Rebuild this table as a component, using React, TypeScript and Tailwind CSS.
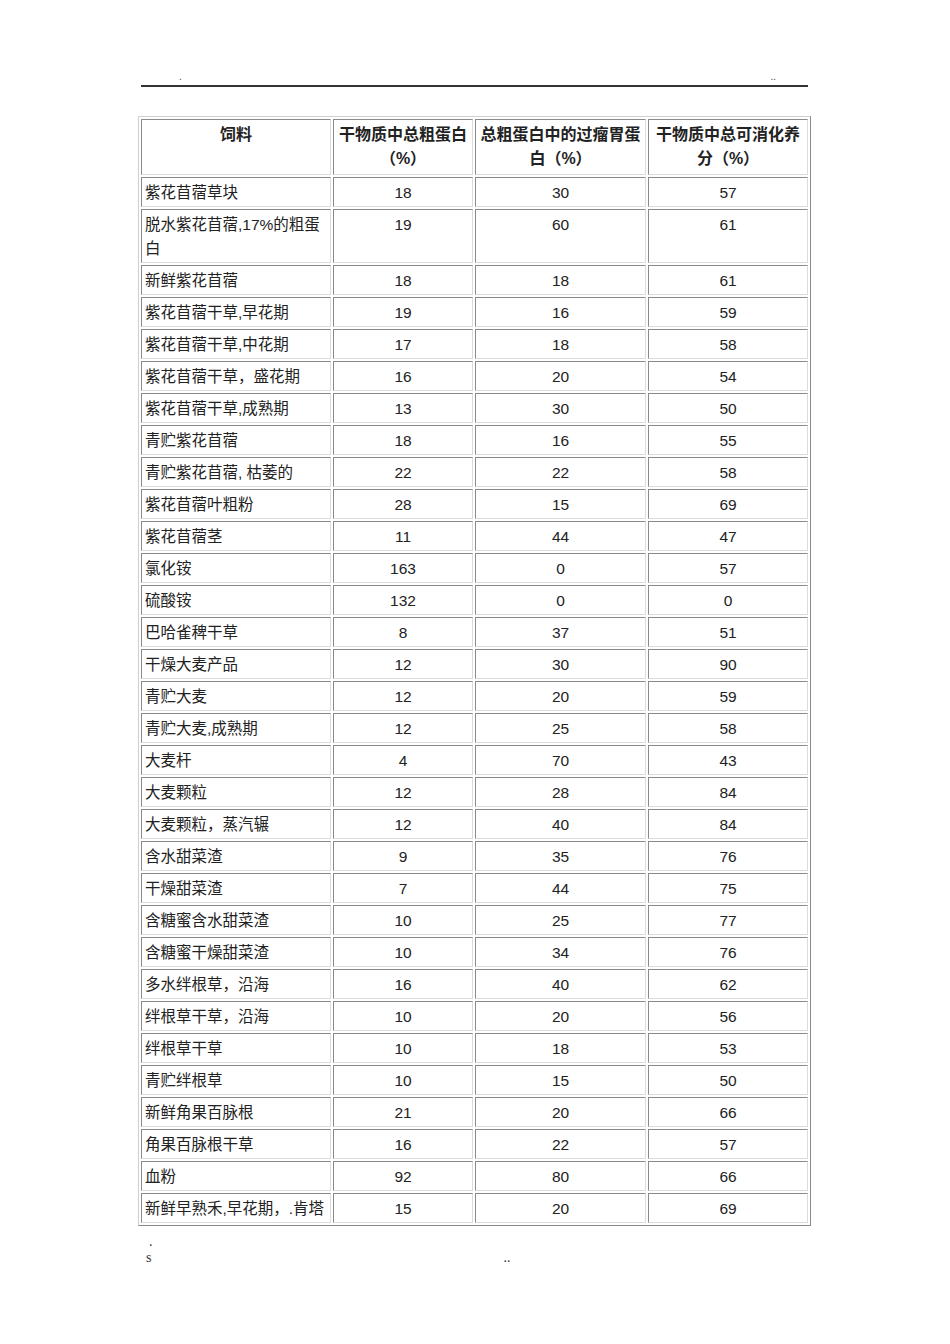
import React from 'react';

type Row = [string, string, string, string];

const rows: Row[] = [
  ['紫花苜蓿草块', '18', '30', '57'],
  ['脱水紫花苜蓿,17%的粗蛋白', '19', '60', '61'],
  ['新鲜紫花苜蓿', '18', '18', '61'],
  ['紫花苜蓿干草,早花期', '19', '16', '59'],
  ['紫花苜蓿干草,中花期', '17', '18', '58'],
  ['紫花苜蓿干草，盛花期', '16', '20', '54'],
  ['紫花苜蓿干草,成熟期', '13', '30', '50'],
  ['青贮紫花苜蓿', '18', '16', '55'],
  ['青贮紫花苜蓿, 枯萎的', '22', '22', '58'],
  ['紫花苜蓿叶粗粉', '28', '15', '69'],
  ['紫花苜蓿茎', '11', '44', '47'],
  ['氯化铵', '163', '0', '57'],
  ['硫酸铵', '132', '0', '0'],
  ['巴哈雀稗干草', '8', '37', '51'],
  ['干燥大麦产品', '12', '30', '90'],
  ['青贮大麦', '12', '20', '59'],
  ['青贮大麦,成熟期', '12', '25', '58'],
  ['大麦杆', '4', '70', '43'],
  ['大麦颗粒', '12', '28', '84'],
  ['大麦颗粒，蒸汽辗', '12', '40', '84'],
  ['含水甜菜渣', '9', '35', '76'],
  ['干燥甜菜渣', '7', '44', '75'],
  ['含糖蜜含水甜菜渣', '10', '25', '77'],
  ['含糖蜜干燥甜菜渣', '10', '34', '76'],
  ['多水绊根草，沿海', '16', '40', '62'],
  ['绊根草干草，沿海', '10', '20', '56'],
  ['绊根草干草', '10', '18', '53'],
  ['青贮绊根草', '10', '15', '50'],
  ['新鲜角果百脉根', '21', '20', '66'],
  ['角果百脉根干草', '16', '22', '57'],
  ['血粉', '92', '80', '66'],
  ['新鲜早熟禾,早花期，.肯塔', '15', '20', '69'],
];

const cell =
  'border border-t-[#8a8a8a] border-l-[#8a8a8a] border-r-[#dcdcdc] border-b-[#dcdcdc] align-top pt-[3px] pb-[1px] leading-[24px]';

const App: React.FC = () => {
  return (
    <div className="w-[950px] h-[1344px] bg-white text-[#222] font-['Liberation_Sans','Noto_Sans_CJK_SC',sans-serif]">
      {/* page header */}
      <div className="ml-[141px] w-[667px] pt-[70px]">
        <div className="flex justify-between text-[10px] leading-[14px] text-[#444]">
          <span className="ml-[38px]">.</span>
          <span className="mr-[32px]">..</span>
        </div>
        <div className="h-[2px] bg-[#333] mt-[1px]" />
      </div>

      <table className="ml-[138px] mt-[29px] w-[673px] table-fixed border-separate border-spacing-[2px] border border-t-[#cfcfcf] border-l-[#cfcfcf] border-r-[#8a8a8a] border-b-[#8a8a8a]">
        <thead>
          <tr>
            <th className={`${cell} w-[190px] text-[16px] font-bold text-center pt-[2px] pb-[3px]`}>饲料</th>
            <th className={`${cell} w-[140px] text-[16px] font-bold text-center px-[2px] pt-[2px] pb-[3px]`}>
              干物质中总粗蛋白（%）
            </th>
            <th className={`${cell} w-[171px] text-[16px] font-bold text-center px-[2px] pt-[2px] pb-[3px]`}>
              总粗蛋白中的过瘤胃蛋白（%）
            </th>
            <th className={`${cell} w-[160px] text-[16px] font-bold text-center px-[4px] pt-[2px] pb-[3px]`}>
              干物质中总可消化养分（%）
            </th>
          </tr>
        </thead>
        <tbody>
          {rows.map((r, i) => (
            <tr key={i}>
              <td className={`${cell} text-[15.5px] text-left pl-[3px] pr-[2px]`}>{r[0]}</td>
              <td className={`${cell} text-[15.5px] text-center`}>{r[1]}</td>
              <td className={`${cell} text-[15.5px] text-center`}>{r[2]}</td>
              <td className={`${cell} text-[15.5px] text-center`}>{r[3]}</td>
            </tr>
          ))}
        </tbody>
      </table>

      {/* page footer */}
      <div className="ml-[146px] mt-[8px] font-['Liberation_Serif',serif] text-[14px] leading-[16px] text-[#333]">
        <div className="ml-[3px]">.</div>
        <div className="flex">
          <span>s</span>
          <span className="ml-[352px]">..</span>
        </div>
      </div>
    </div>
  );
};

export default App;
